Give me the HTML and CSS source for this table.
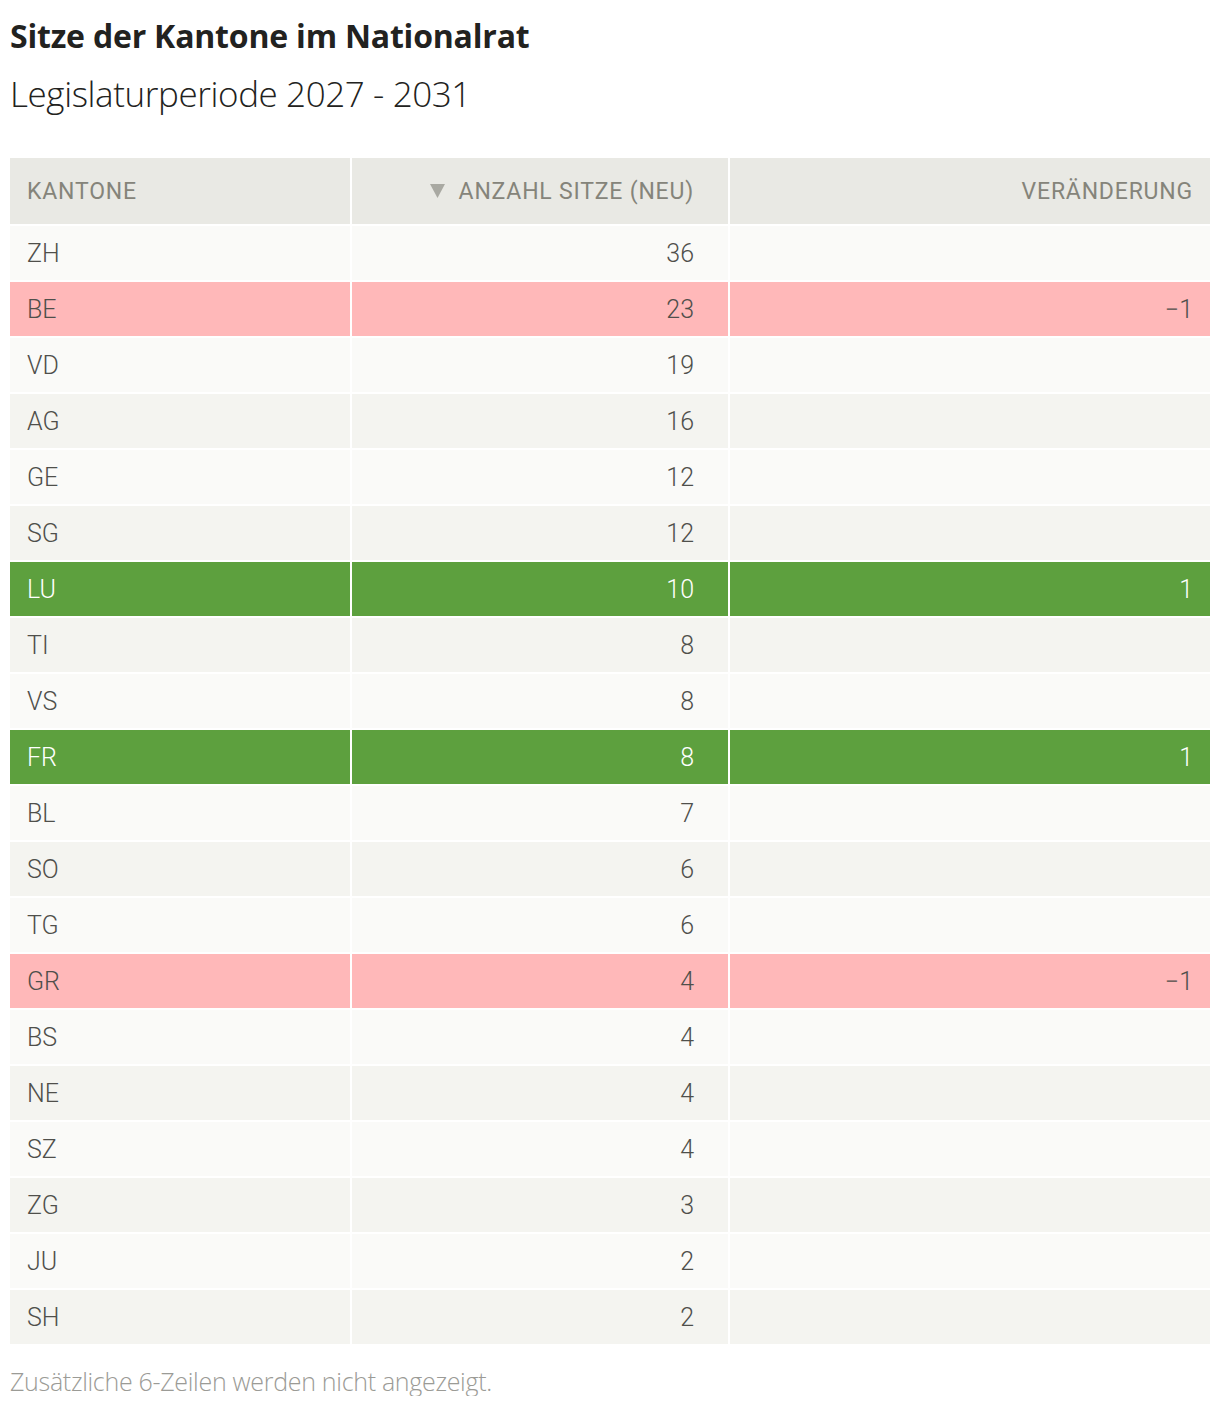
FILE: index.html
```html
<!DOCTYPE html>
<html lang="de">
<head>
<meta charset="utf-8">
<title>Sitze der Kantone im Nationalrat</title>
<link rel="stylesheet" href="styles.css">
</head>
<body>
<div class="page">
  <h1 class="title">Sitze der Kantone im Nationalrat</h1>
  <p class="subtitle">Legislaturperiode 2027 - 2031</p>
  <div class="table">
    <div class="row head">
      <div class="cell">KANTONE</div>
      <div class="cell num mid"><svg class="sort" width="15" height="14" viewBox="0 0 15 14"><polygon points="0,0 15,0 7.5,14" fill="#a9a9a2"/></svg>ANZAHL SITZE (NEU)</div>
      <div class="cell num">VERÄNDERUNG</div>
    </div>
    <div class="row odd"><div class="cell">ZH</div><div class="cell num mid">36</div><div class="cell num"></div></div>
    <div class="row neg"><div class="cell">BE</div><div class="cell num mid">23</div><div class="cell num">&minus;1</div></div>
    <div class="row odd"><div class="cell">VD</div><div class="cell num mid">19</div><div class="cell num"></div></div>
    <div class="row even"><div class="cell">AG</div><div class="cell num mid">16</div><div class="cell num"></div></div>
    <div class="row odd"><div class="cell">GE</div><div class="cell num mid">12</div><div class="cell num"></div></div>
    <div class="row even"><div class="cell">SG</div><div class="cell num mid">12</div><div class="cell num"></div></div>
    <div class="row pos"><div class="cell">LU</div><div class="cell num mid">10</div><div class="cell num">1</div></div>
    <div class="row even"><div class="cell">TI</div><div class="cell num mid">8</div><div class="cell num"></div></div>
    <div class="row odd"><div class="cell">VS</div><div class="cell num mid">8</div><div class="cell num"></div></div>
    <div class="row pos"><div class="cell">FR</div><div class="cell num mid">8</div><div class="cell num">1</div></div>
    <div class="row odd"><div class="cell">BL</div><div class="cell num mid">7</div><div class="cell num"></div></div>
    <div class="row even"><div class="cell">SO</div><div class="cell num mid">6</div><div class="cell num"></div></div>
    <div class="row odd"><div class="cell">TG</div><div class="cell num mid">6</div><div class="cell num"></div></div>
    <div class="row neg"><div class="cell">GR</div><div class="cell num mid">4</div><div class="cell num">&minus;1</div></div>
    <div class="row odd"><div class="cell">BS</div><div class="cell num mid">4</div><div class="cell num"></div></div>
    <div class="row even"><div class="cell">NE</div><div class="cell num mid">4</div><div class="cell num"></div></div>
    <div class="row odd"><div class="cell">SZ</div><div class="cell num mid">4</div><div class="cell num"></div></div>
    <div class="row even"><div class="cell">ZG</div><div class="cell num mid">3</div><div class="cell num"></div></div>
    <div class="row odd"><div class="cell">JU</div><div class="cell num mid">2</div><div class="cell num"></div></div>
    <div class="row even"><div class="cell">SH</div><div class="cell num mid">2</div><div class="cell num"></div></div>
  </div>
  <p class="note">Zusätzliche 6-Zeilen werden nicht angezeigt.</p>
</div>
</body>
</html>
```

FILE: styles.css
```css
html, body {
  margin: 0;
  padding: 0;
  background: #ffffff;
}
.page {
  padding: 0 10px;
  font-family: Roboto, "Liberation Sans", sans-serif;
  color: #4f4f4b;
}
.title {
  margin: 0;
  padding-top: 16px;
  font-family: "Open Sans", Roboto, sans-serif;
  font-size: 32px;
  line-height: 40px;
  font-weight: 700;
  color: #222220;
  letter-spacing: -0.2px;
}
.subtitle {
  margin: 16px 0 0 0;
  font-family: "Open Sans", Roboto, sans-serif;
  font-size: 35px;
  line-height: 44px;
  font-weight: 300;
  color: #222220;
  letter-spacing: -0.4px;
}
.table {
  margin-top: 42px;
  display: grid;
  row-gap: 2px;
  width: 1200px;
}
.row {
  display: grid;
  grid-template-columns: 340px 376px 480px;
  column-gap: 2px;
  height: 54px;
}
.row.head {
  height: 66px;
}
.cell {
  display: flex;
  align-items: center;
  padding: 0 17px;
  font-size: 25px;
  font-weight: 300;
  color: #4f4f4b;
}
.cell.num {
  justify-content: flex-end;
}
.cell.mid {
  padding-right: 34px;
}
.head .cell {
  background: #e9e9e4;
  color: #85847a;
  font-size: 23px;
  font-weight: 400;
  letter-spacing: 0.8px;
}
.sort {
  margin-right: 14px;
  flex: none;
}
.odd .cell {
  background: #fafaf8;
}
.even .cell {
  background: #f4f4f0;
}
.neg .cell {
  background: #ffb8b9;
}
.pos .cell {
  background: #5da03e;
  color: #ffffff;
}
.note {
  margin: 22px 0 0 0;
  font-family: "Open Sans", Roboto, sans-serif;
  font-size: 25px;
  line-height: 30px;
  font-weight: 300;
  color: #9b9b96;
  letter-spacing: -0.3px;
}
```
